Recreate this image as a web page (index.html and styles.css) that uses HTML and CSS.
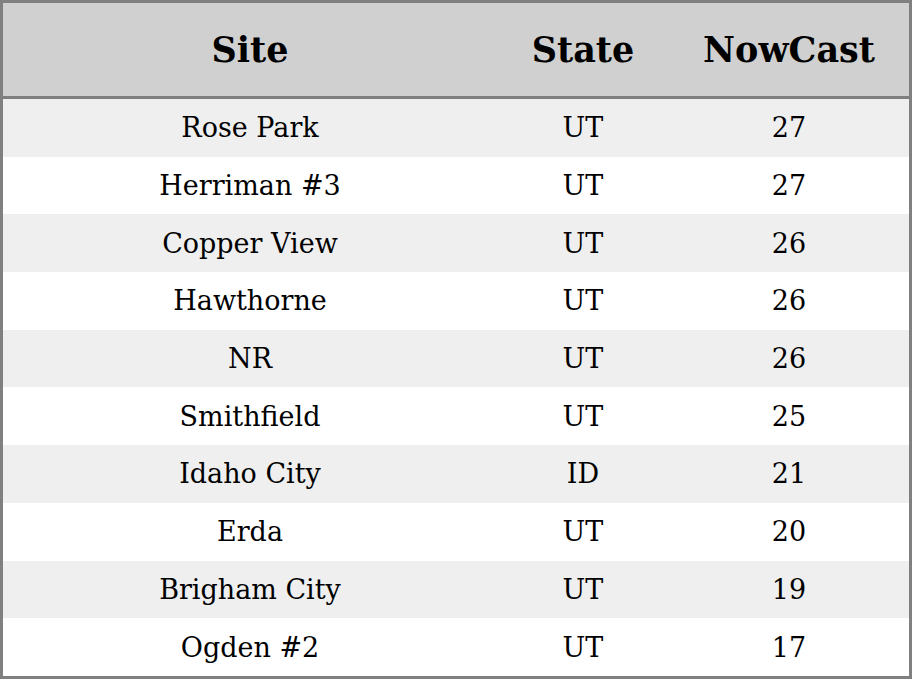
FILE: index.html
```html
<!DOCTYPE html>
<html>
<head>
<meta charset="utf-8">
<link rel="stylesheet" href="styles.css">
</head>
<body>
<table class="aq">
  <colgroup><col class="c-site"><col class="c-state"><col class="c-now"></colgroup>
  <thead>
    <tr><th>Site</th><th>State</th><th>NowCast</th></tr>
  </thead>
  <tbody>
    <tr><td>Rose Park</td><td>UT</td><td>27</td></tr>
    <tr><td>Herriman #3</td><td>UT</td><td>27</td></tr>
    <tr><td>Copper View</td><td>UT</td><td>26</td></tr>
    <tr><td>Hawthorne</td><td>UT</td><td>26</td></tr>
    <tr><td>NR</td><td>UT</td><td>26</td></tr>
    <tr><td>Smithfield</td><td>UT</td><td>25</td></tr>
    <tr><td>Idaho City</td><td>ID</td><td>21</td></tr>
    <tr><td>Erda</td><td>UT</td><td>20</td></tr>
    <tr><td>Brigham City</td><td>UT</td><td>19</td></tr>
    <tr><td>Ogden #2</td><td>UT</td><td>17</td></tr>
  </tbody>
</table>
</body>
</html>
```
FILE: styles.css
```css
html, body {
  margin: 0;
  padding: 0;
  background: #ffffff;
}
.aq {
  width: 912px;
  height: 679px;
  border-collapse: separate;
  border-spacing: 0;
  border: 3px solid #808080;
  box-sizing: border-box;
  font-family: "DejaVu Serif", serif;
  color: #000;
  table-layout: fixed;
}
.c-site { width: 494px; }
.c-state { width: 172px; }
.c-now { width: 240px; }
.aq th {
  background: #d0d0d0;
  font-size: 35px;
  font-weight: bold;
  height: 96px;
  padding: 0;
  border-bottom: 3px solid #808080;
  box-sizing: border-box;
  text-align: center;
  vertical-align: middle;
}
.aq td {
  font-size: 27px;
  height: 57px;
  padding: 0;
  text-align: center;
  vertical-align: middle;
}
.aq tbody tr:nth-child(odd) td { background: #efefef; }
.aq tbody tr:nth-child(even) td { background: #ffffff; }
```
